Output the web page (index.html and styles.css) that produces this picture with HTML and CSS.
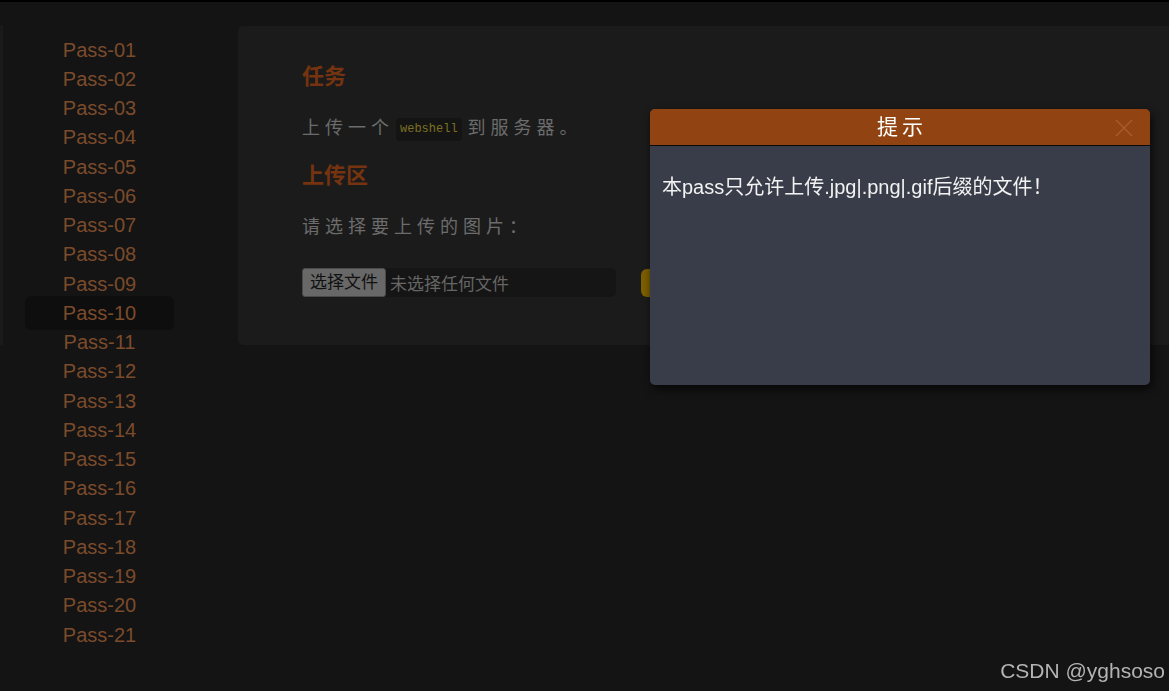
FILE: index.html
```html
<!DOCTYPE html>
<html lang="zh-CN">
<head>
  <meta charset="UTF-8">
  <title>Upload Labs - Pass-10</title>
  <link rel="stylesheet" href="styles.css">
</head>
<body>
  <div class="layout">
    <!-- Sidebar -->
    <aside class="sidebar">
      <div class="side-edge"></div>
      <ul class="nav">
        <li><a href="#">Pass-01</a></li>
        <li><a href="#">Pass-02</a></li>
        <li><a href="#">Pass-03</a></li>
        <li><a href="#">Pass-04</a></li>
        <li><a href="#">Pass-05</a></li>
        <li><a href="#">Pass-06</a></li>
        <li><a href="#">Pass-07</a></li>
        <li><a href="#">Pass-08</a></li>
        <li><a href="#">Pass-09</a></li>
        <li class="active"><a href="#">Pass-10</a></li>
        <li><a href="#">Pass-11</a></li>
        <li><a href="#">Pass-12</a></li>
        <li><a href="#">Pass-13</a></li>
        <li><a href="#">Pass-14</a></li>
        <li><a href="#">Pass-15</a></li>
        <li><a href="#">Pass-16</a></li>
        <li><a href="#">Pass-17</a></li>
        <li><a href="#">Pass-18</a></li>
        <li><a href="#">Pass-19</a></li>
        <li><a href="#">Pass-20</a></li>
        <li><a href="#">Pass-21</a></li>
      </ul>
    </aside>

    <!-- Main Content -->
    <main class="panel">
      <h2 class="title first">任务</h2>
      <p class="desc">上传一个<code>webshell</code>到服务器。</p>
      <h2 class="title">上传区</h2>
      <p class="desc">请选择要上传的图片：</p>
      <div class="upload-row">
        <div class="file-box">
          <span class="file-btn">选择文件</span>
          <span class="file-name">未选择任何文件</span>
        </div>
        <button class="submit">上传</button>
      </div>
    </main>
  </div>

  <!-- Dialog -->
  <div class="dialog">
    <div class="dialog-head">
      <span class="dialog-title">提示</span>
      <svg class="dialog-close" width="18" height="18" viewBox="0 0 18 18">
        <path d="M1 1L17 17M17 1L1 17" stroke="#a95e2e" stroke-width="1.2" fill="none"/>
      </svg>
    </div>
    <div class="dialog-body">本pass只允许上传.jpg|.png|.gif后缀的文件！</div>
  </div>

  <div class="watermark">CSDN @yghsoso</div>
</body>
</html>
```

FILE: styles.css
```css
/* General Styles */
body {
  font-family: 'Liberation Sans', 'Noto Sans CJK SC', sans-serif;
  margin: 0;
  padding: 0;
  background-color: #141414;
  border-top: 2px solid #000;
  overflow: hidden;
  height: 689px;
}

.layout {
  display: flex;
}

/* Sidebar */
.sidebar {
  width: 238px;
  flex-shrink: 0;
  display: flex;
}

.side-edge {
  width: 3px;
  height: 320px;
  margin-top: 23px;
  background-color: #1a1a1a;
}

.nav {
  list-style: none;
  margin: 33.5px 0 0 22px;
  padding: 0;
  width: 149px;
}

.nav li {
  height: 29.25px;
  line-height: 29.25px;
  text-align: center;
  font-size: 20px;
}

.nav li.active {
  background-color: #0e0e0e;
  border-radius: 6px;
  margin: -2.4px 0;
  padding: 2.4px 0;
}

.nav a {
  color: #7b4b2b;
  text-decoration: none;
}

/* Main Content */
.panel {
  flex: 1;
  margin: 24px -20px 0 0;
  height: 319px;
  padding: 35px 64px 0 64px;
  box-sizing: border-box;
  background-color: #1b1b1b;
  border-radius: 5px;
}

.title {
  margin: 17px 0 0;
  font-size: 22px;
  line-height: 31px;
  font-weight: bold;
  color: #75330f;
}

.title.first {
  margin-top: 0;
}

.desc {
  margin: 21px 0 0;
  font-size: 18px;
  line-height: 30px;
  letter-spacing: 5px;
  color: #6c6c6c;
}

.desc code {
  display: inline-block;
  font-family: 'Liberation Mono', monospace;
  font-size: 12px;
  line-height: 23px;
  letter-spacing: 0;
  padding: 0 4px;
  margin: 0 6px 0 2px;
  background-color: #141414;
  color: #7d7120;
  border-radius: 4px;
  vertical-align: 2px;
}

.upload-row {
  display: flex;
  align-items: center;
  margin-top: 26px;
}

.file-box {
  display: flex;
  align-items: center;
  width: 314px;
  height: 29px;
  background-color: #151515;
  border-radius: 5px;
}

.file-btn {
  height: 27px;
  line-height: 27px;
  padding: 0 7px;
  font-size: 17px;
  color: #111;
  background-color: #686868;
  border: 1px solid #4a4a4a;
  border-radius: 3px;
}

.file-name {
  margin-left: 4px;
  font-size: 17px;
  color: #666;
}

.submit {
  margin-left: 25px;
  height: 28px;
  padding: 0 14px;
  border: none;
  border-radius: 6px;
  background-color: #7c5f00;
  color: #111;
  font-size: 15px;
}

/* Dialog */
.dialog {
  position: fixed;
  left: 650px;
  top: 109px;
  width: 500px;
  height: 276px;
  background-color: #393d49;
  border-radius: 5px;
  box-shadow: 2px 4px 10px rgba(0, 0, 0, 0.7);
  overflow: hidden;
}

.dialog-head {
  position: relative;
  height: 36px;
  line-height: 36px;
  text-align: center;
  background-color: #914411;
  border-bottom: 1px solid #0a0a0a;
}

.dialog-title {
  font-size: 21px;
  letter-spacing: 4px;
  padding-left: 4px;
  color: #fff;
}

.dialog-close {
  position: absolute;
  right: 17px;
  top: 10px;
}

.dialog-body {
  padding: 26px 12px;
  font-size: 20px;
  line-height: 30px;
  color: #f2f2f2;
}

/* Watermark */
.watermark {
  position: fixed;
  right: 4px;
  bottom: 8px;
  font-family: 'Liberation Sans', sans-serif;
  font-size: 21px;
  color: #b4b4b4;
}
```
